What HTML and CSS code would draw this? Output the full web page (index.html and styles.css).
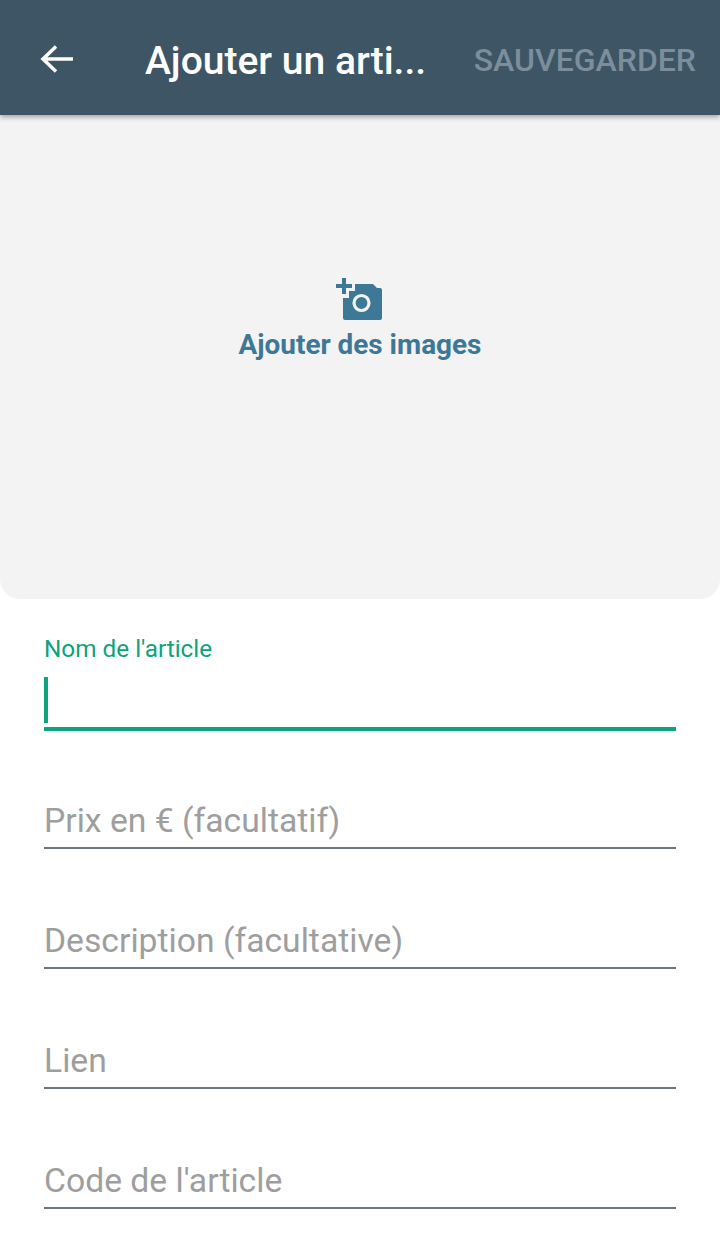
FILE: index.html
```html
<!DOCTYPE html>
<html lang="fr">
<head>
    <meta charset="UTF-8">
    <meta name="viewport" content="width=device-width, initial-scale=1.0">
    <title>Ajouter un article</title>
    <link rel="stylesheet" href="styles.css">
</head>
<body>
    <div class="toolbar">
        <svg class="back-icon" width="34" height="32" viewBox="0 0 34 32">
            <path d="M33 16H3M16 3.500L3 16l13 12.500" fill="none" stroke="#fff" stroke-width="3.500"/>
        </svg>
        <div class="title">Ajouter un arti...</div>
        <div class="save">SAUVEGARDER</div>
    </div>

    <div class="image-box">
        <svg class="camera-icon" width="47" height="43" viewBox="0 0 47 43">
            <path d="M6 0h4v6h6v4h-6v6h-4v-6h-6v-4h6z" fill="#3d7896"/>
            <path d="M19 6H37L41 10H44a2 2 0 0 1 2 2V40a2 2 0 0 1-2 2H9a2 2 0 0 1-2-2V20H13V13H19z" fill="#3d7896"/>
            <circle cx="25.500" cy="25" r="7.500" fill="none" stroke="#f2f2f2" stroke-width="3.200"/>
        </svg>
        <div class="image-label">Ajouter des images</div>
    </div>

    <div class="form">
        <div class="field active">
            <label>Nom de l'article</label>
            <div class="caret"></div>
        </div>
        <div class="field">Prix en € (facultatif)</div>
        <div class="field">Description (facultative)</div>
        <div class="field">Lien</div>
        <div class="field">Code de l'article</div>
    </div>
</body>
</html>
```

FILE: styles.css
```css
body { font-family: Roboto, sans-serif; margin: 0; background-color: #fff; height: 1235px; overflow: hidden; }
.toolbar { display: flex; align-items: center; height: 115px; padding: 5px 24px 0 40px; box-sizing: border-box; background-color: #3d5565; box-shadow: 0 2px 5px rgba(0,0,0,0.35); position: relative; }
.back-icon { flex-shrink: 0; margin-top: -3px; }
.title { margin-left: 71px; padding-top: 2px; color: #fff; font-size: 39px; font-weight: 500; white-space: nowrap; }
.save { margin-left: auto; color: #7c8e9b; font-size: 32px; font-weight: 500; white-space: nowrap; }
.image-box { display: flex; flex-direction: column; align-items: center; height: 484px; padding-top: 163px; box-sizing: border-box; background-color: #f3f3f3; border-radius: 0 0 20px 20px; }
.camera-icon { display: block; margin-left: -1px; }
.image-label { margin-top: 7px; color: #3d7896; font-size: 27.900px; font-weight: 700; }
.form { padding: 0 44px; }
.field { height: 48px; margin-top: 70px; border-bottom: 2px solid #6e7780; color: #9e9e9e; font-size: 33.700px; line-height: 44px; }
.field.active { height: auto; margin-top: 34px; margin-bottom: -2px; border-bottom: 4px solid #0ca37f; }
.field.active label { display: block; color: #0ca37f; font-size: 24.300px; line-height: 32px; }
.caret { width: 4px; height: 46px; margin-top: 12px; margin-bottom: 4px; background-color: #0ca37f; }
```
